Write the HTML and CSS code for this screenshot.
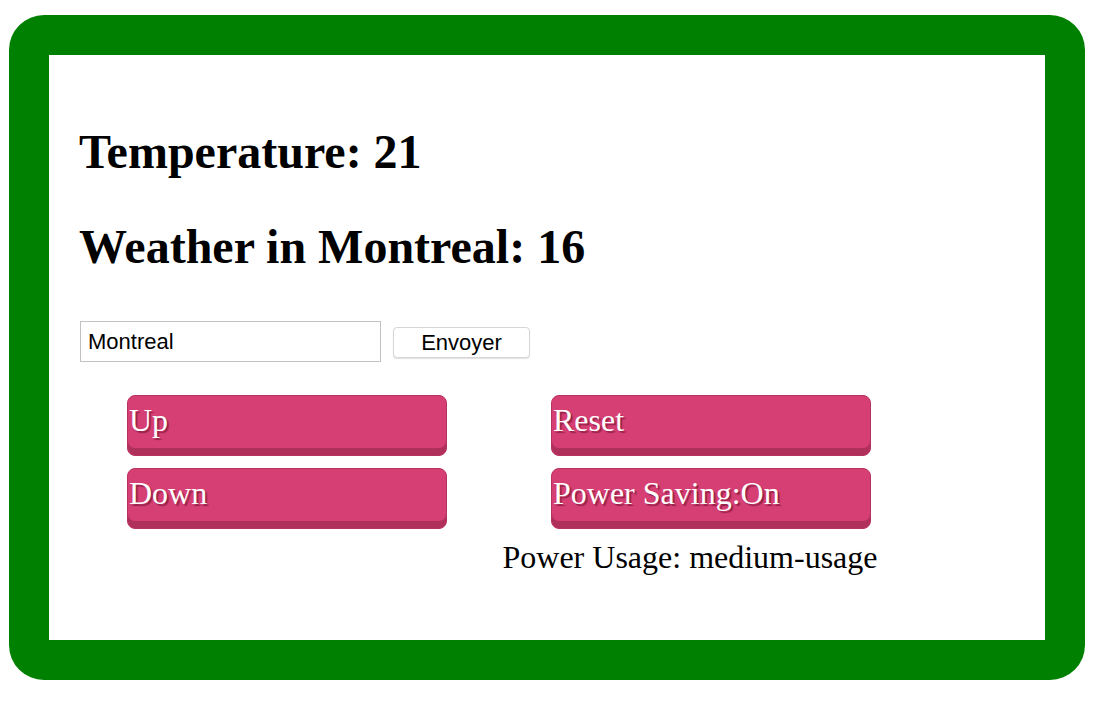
FILE: index.html
```html
<!DOCTYPE html>
<html>
<head>
<meta charset="utf-8">
<link rel="stylesheet" href="styles.css">
</head>
<body>
<div class="frame">
  <h2 class="title">Temperature: 21</h2>
  <h2 class="title">Weather in Montreal: 16</h2>
  <form class="city-form">
    <input class="city-input" type="text" value="Montreal">
    <button class="send-btn" type="button">Envoyer</button>
  </form>
  <div class="controls">
    <div class="col">
      <button class="pink-btn" type="button">Up</button>
      <button class="pink-btn" type="button">Down</button>
    </div>
    <div class="col">
      <button class="pink-btn" type="button">Reset</button>
      <button class="pink-btn" type="button">Power Saving:On</button>
      <p class="usage">Power Usage: medium-usage</p>
    </div>
  </div>
</div>
</body>
</html>
```
FILE: styles.css
```css
html, body {
  margin: 0;
  padding: 0;
  background: #ffffff;
}
body {
  font-family: "Liberation Serif", "Times New Roman", serif;
  font-size: 32px;
  color: #000;
  padding: 15px 8px 0 9px;
}
.frame {
  box-sizing: border-box;
  width: 1076px;
  height: 665px;
  border: 40px solid #008000;
  border-radius: 35px;
  padding: 29px 30px 0 30px;
  background: #fff;
}
.title {
  font-size: 48px;
  font-weight: bold;
  margin: 40px 0;
  line-height: normal;
}
.city-form {
  display: flex;
  align-items: center;
  gap: 12px;
  margin: 47px 0 0 1px;
}
.city-input {
  box-sizing: border-box;
  width: 301px;
  height: 41px;
  border: 1px solid #c2c2c2;
  padding: 0 0 0 7px;
  font-family: "Liberation Sans", Arial, sans-serif;
  font-size: 22px;
  color: #000;
  outline: none;
}
.send-btn {
  box-sizing: border-box;
  width: 137px;
  height: 31px;
  background: #fff;
  border: 1px solid #d6d6d6;
  border-radius: 4px;
  box-shadow: 0 1px 1px rgba(0,0,0,0.12);
  font-family: "Liberation Sans", Arial, sans-serif;
  font-size: 22px;
  color: #000;
  padding: 0;
  line-height: 29px;
  margin-top: 2px;
}
.controls {
  display: grid;
  grid-template-columns: 320px 320px;
  column-gap: 104px;
  margin-top: 33px;
  padding-left: 48px;
}
.col {
  display: flex;
  flex-direction: column;
  gap: 12px;
}
.pink-btn {
  box-sizing: border-box;
  width: 320px;
  background: #d53f74;
  border: 1px solid #b8325f;
  border-radius: 8px;
  box-shadow: inset 0 -7px 0 #b0305c;
  color: #fff;
  font-family: "Liberation Serif", "Times New Roman", serif;
  font-size: 32px;
  line-height: 37px;
  text-align: left;
  padding: 6px 0 16px 1px;
  display: block;
  text-shadow: 2px 2px 1px #962249;
  align-self: flex-start;
}
.usage {
  margin: -2px 42px 0 0;
  align-self: center;
  white-space: nowrap;
  line-height: normal;
}
```
